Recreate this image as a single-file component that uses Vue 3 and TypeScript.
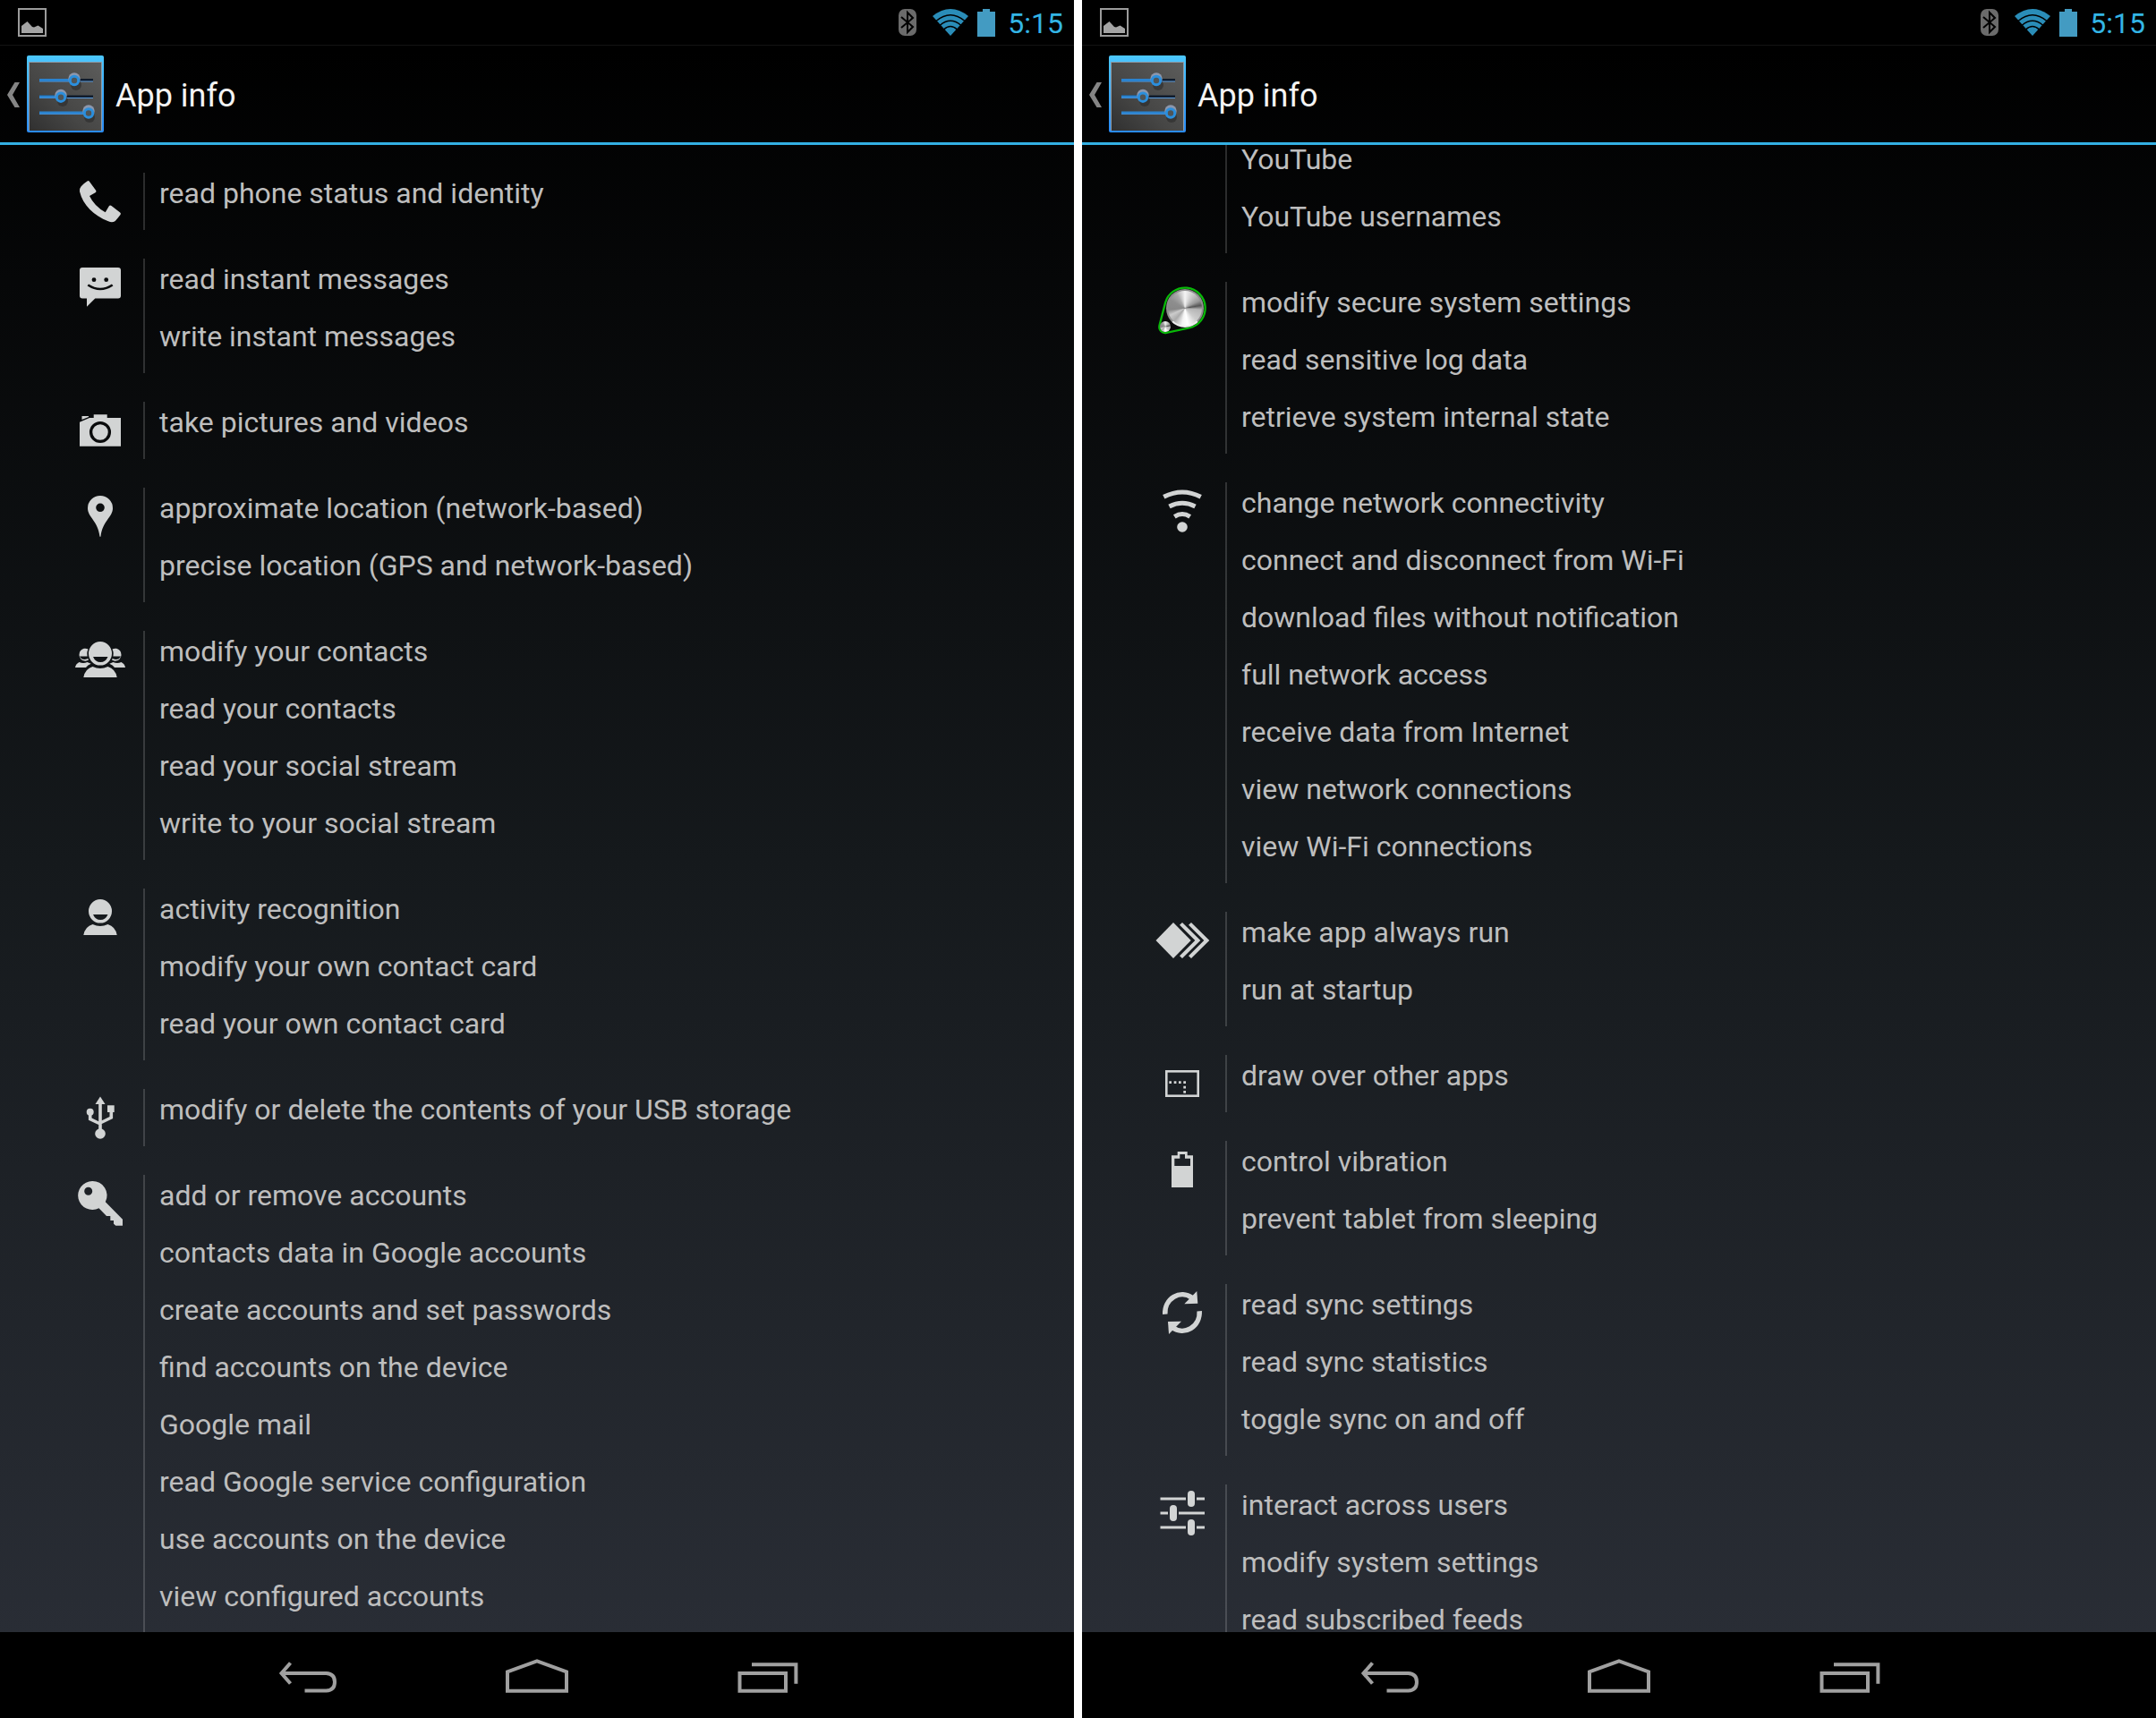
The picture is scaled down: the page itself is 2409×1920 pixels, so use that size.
<script setup lang="ts">
interface PermissionGroup {
  icon: string
  permissions: string[]
}

interface Screen {
  id: string
  scrolled: boolean
  groups: PermissionGroup[]
}

const screens: Screen[] = [
  {
    id: 'left',
    scrolled: false,
    groups: [
      { icon: 'phone', permissions: ['read phone status and identity'] },
      { icon: 'message', permissions: ['read instant messages', 'write instant messages'] },
      { icon: 'camera', permissions: ['take pictures and videos'] },
      {
        icon: 'location',
        permissions: ['approximate location (network-based)', 'precise location (GPS and network-based)'],
      },
      {
        icon: 'contacts',
        permissions: [
          'modify your contacts',
          'read your contacts',
          'read your social stream',
          'write to your social stream',
        ],
      },
      {
        icon: 'person',
        permissions: ['activity recognition', 'modify your own contact card', 'read your own contact card'],
      },
      { icon: 'usb', permissions: ['modify or delete the contents of your USB storage'] },
      {
        icon: 'key',
        permissions: [
          'add or remove accounts',
          'contacts data in Google accounts',
          'create accounts and set passwords',
          'find accounts on the device',
          'Google mail',
          'read Google service configuration',
          'use accounts on the device',
          'view configured accounts',
        ],
      },
    ],
  },
  {
    id: 'right',
    scrolled: true,
    groups: [
      { icon: 'none', permissions: ['YouTube', 'YouTube usernames'] },
      {
        icon: 'knob',
        permissions: ['modify secure system settings', 'read sensitive log data', 'retrieve system internal state'],
      },
      {
        icon: 'network',
        permissions: [
          'change network connectivity',
          'connect and disconnect from Wi-Fi',
          'download files without notification',
          'full network access',
          'receive data from Internet',
          'view network connections',
          'view Wi-Fi connections',
        ],
      },
      { icon: 'run', permissions: ['make app always run', 'run at startup'] },
      { icon: 'overlay', permissions: ['draw over other apps'] },
      { icon: 'battery', permissions: ['control vibration', 'prevent tablet from sleeping'] },
      { icon: 'sync', permissions: ['read sync settings', 'read sync statistics', 'toggle sync on and off'] },
      {
        icon: 'sliders',
        permissions: ['interact across users', 'modify system settings', 'read subscribed feeds'],
      },
    ],
  },
]
</script>

<template>
  <div class="screens">
    <section v-for="screen in screens" :key="screen.id" class="screen">
      <div class="status-bar">
        <svg class="picture-icon" viewBox="0 0 32 32" aria-hidden="true">
          <rect x="1" y="1" width="30" height="30" fill="none" stroke="#9c9c9c" stroke-width="2" />
          <path d="M4 28V20L10.500 15L16 21L18 21.500L22.500 19.500L28 23V28Z" fill="#a4a4a4" />
        </svg>
        <div class="indicators">
          <svg class="bluetooth-icon" viewBox="0 0 20 30" aria-hidden="true">
            <rect width="20" height="30" rx="7" fill="#6b6b6b" />
            <path d="M3 9L16 20L10 26V4L16 10L3 21" fill="none" stroke="#000" stroke-width="2" />
          </svg>
          <svg class="signal-icon" viewBox="0 0 40 30" aria-hidden="true">
            <path d="M0 8Q20-8 40 8L20 30Z" fill="#2a8db8" />
            <path d="M4 13.500Q20 0 36 13.500M8 18.500Q20 8 32 18.500M12.500 23Q20 16 27.500 23" fill="none" stroke="#000" stroke-width="1.600" />
          </svg>
          <svg class="charge-icon" viewBox="0 0 20 31" aria-hidden="true">
            <path d="M0 3H6V0H14V3H20V31H0Z" fill="#439bc2" />
          </svg>
          <time class="clock">5:15</time>
        </div>
      </div>

      <header class="action-bar">
        <button class="up-button" type="button" aria-label="Navigate up">
          <svg class="up-caret" viewBox="0 0 14 30" aria-hidden="true">
            <path d="M8.500 2H14L6 16L14 30H8.500L0 16Z" fill="#858585" />
          </svg>
          <svg class="app-icon" viewBox="0 0 86 86" aria-hidden="true">
            <defs>
              <linearGradient :id="`frame-${screen.id}`" x1="0" y1="0" x2="0" y2="1">
                <stop offset="0" stop-color="#4cc8ff" />
                <stop offset="1" stop-color="#2a8bf5" />
              </linearGradient>
              <linearGradient :id="`plate-${screen.id}`" x1="1" y1="0" x2="0" y2="1">
                <stop offset="0" stop-color="#5c5c5b" />
                <stop offset="0.600" stop-color="#464645" />
                <stop offset="1" stop-color="#303030" />
              </linearGradient>
            </defs>
            <rect width="86" height="86" rx="2" :fill="`url(#frame-${screen.id})`" />
            <rect x="2" y="7" width="82" height="77" fill="#8b9aa6" />
            <rect x="3" y="8" width="80" height="76" :fill="`url(#plate-${screen.id})`" />
            <g stroke-width="3">
              <path d="M14 27.500H74M14 46H74" stroke="#101c2c" />
              <path d="M14 29H74M14 47.500H74M14 65.500H68" stroke="#5b9bdc" stroke-width="1" />
              <path d="M14 27.500H50M14 46H36M14 64H68" stroke="#2b83cf" />
            </g>
            <g fill="#2b2b2b" opacity="0.600">
              <circle cx="55" cy="33" r="6" />
              <circle cx="40" cy="51" r="6" />
              <circle cx="70" cy="69" r="6" />
            </g>
            <g fill="#8c97ad">
              <circle cx="53" cy="26" r="6.700" />
              <circle cx="38" cy="44.500" r="6.700" />
              <circle cx="69" cy="62" r="6.700" />
            </g>
            <g fill="#4f5558" stroke="#2b8fdd" stroke-width="3">
              <circle cx="53" cy="28" r="4.700" />
              <circle cx="38" cy="46.700" r="4.700" />
              <circle cx="69" cy="64.500" r="4.700" />
            </g>
          </svg>
        </button>
        <h1 class="title">App info</h1>
      </header>

      <main class="content">
        <ul class="groups" :class="{ scrolled: screen.scrolled }">
          <li v-for="group in screen.groups" :key="group.icon" class="group">
            <svg class="group-icon" viewBox="0 0 64 64" aria-hidden="true">
              <path
                v-if="group.icon === 'phone'"
                d="M17.500 9.500Q19 8.500 20 10L27.300 20Q28 21.400 26.500 22.300L20 26Q25.500 37.500 37.700 44.300L41.700 37.500Q42.800 36 44.500 37L54.200 44.500Q55.600 45.700 54.500 47Q49.500 53.500 48 54.500Q45 56 41 54.300C25 48 12.500 36 9 21Q8.500 17.800 10.500 15.500Q14 11.500 17.500 9.500Z"
              />
              <template v-else-if="group.icon === 'message'">
                <path d="M12 10H52Q55 10 55 13V41.500Q55 44.500 52 44.500H26.300L17 53.700V44.500H12Q9 44.500 9 41.500V13Q9 10 12 10Z" />
                <circle cx="25" cy="23.700" r="2.400" class="ink" />
                <circle cx="38.700" cy="23.700" r="2.400" class="ink" />
                <path d="M18.300 29.500Q32 38.500 45.700 29.500" class="ink-line" stroke-width="2.600" />
              </template>
              <template v-else-if="group.icon === 'camera'">
                <path d="M9 22.700L20 18H24.700V14.300H39.700V18H55V49.700H9Z" />
                <path d="M11.500 16H19V17L11.500 20Z" />
                <circle cx="32" cy="34" r="10.400" class="ink-line" stroke-width="3.300" />
              </template>
              <path
                v-else-if="group.icon === 'location'"
                fill-rule="evenodd"
                d="M32 9A14 14 0 0 1 46 23C46 33 34.500 37 32.500 54.700H31.500C29.500 37 18 33 18 23A14 14 0 0 1 32 9ZM32 17.500A4.800 4.800 0 1 0 32 27.100A4.800 4.800 0 1 0 32 17.500Z"
              />
              <template v-else-if="group.icon === 'contacts'">
                <path d="M4 41Q4.500 37 8.500 35Q13 37 17.500 35L21.700 36.700Q18 38 16 41Z" />
                <path d="M60 41Q59.500 37 55.500 35Q51 37 46.500 35L42.300 36.700Q46 38 48 41Z" />
                <path fill-rule="evenodd" d="M18.500 20.500A6.800 7 0 1 0 19 32.500Q17 29 17.300 25Q17.500 22.500 18.500 20.500ZM9 28.500H17.500L18.300 31Q12 34 9 28.500Z" />
                <path fill-rule="evenodd" d="M45.500 20.500A6.800 7 0 1 1 45 32.500Q47 29 46.700 25Q46.500 22.500 45.500 20.500ZM55 28.500H46.500L45.700 31Q52 34 55 28.500Z" />
                <path fill-rule="evenodd" d="M32 12A13 13.300 0 1 0 32 38.600A13 13.300 0 1 0 32 12ZM24 29H40.500Q38 35 32.300 35Q26.500 35 24 29Z" />
                <path d="M13.300 52Q15 42.500 23.500 40Q32 44 40.500 40Q49 42.500 50.700 52Z" />
              </template>
              <template v-else-if="group.icon === 'person'">
                <path fill-rule="evenodd" d="M32 12A13 13.300 0 1 0 32 38.600A13 13.300 0 1 0 32 12ZM24 29H40.500Q38 35 32.300 35Q26.500 35 24 29Z" />
                <path d="M13.300 52Q15 42.500 23.500 40Q32 44 40.500 40Q49 42.500 50.700 52Z" />
              </template>
              <template v-else-if="group.icon === 'usb'">
                <path d="M32 8.500L37.500 17H26.500Z" />
                <circle cx="32" cy="50" r="5.800" />
                <circle cx="20.700" cy="25.700" r="4" />
                <rect x="40" y="18.300" width="7.700" height="7.700" />
                <path d="M32 15V46M20.700 26V33.500L32 39M44.300 25V32L32 38" class="line" stroke-width="3.600" />
              </template>
              <path
                v-else-if="group.icon === 'key'"
                fill-rule="evenodd"
                d="M23 7A16 16 0 0 1 37.800 30.300L57 49.700V56.700H49.300L47 54.700V51H43.300V46H39L30.500 37.200A16 16 0 1 1 23 7ZM18.700 13.800A4.500 4.500 0 1 0 18.700 22.800A4.500 4.500 0 1 0 18.700 13.800Z"
              />
              <template v-else-if="group.icon === 'knob'">
                <path
                  d="M13 23.600A22.700 22.700 0 1 1 39.700 51.500L14.400 56.900A6.700 6.700 0 0 1 6.500 48.600Z"
                  fill="#0a0a0a"
                  stroke="#08b808"
                  stroke-width="2.300"
                />
                <foreignObject x="14" y="8" width="42" height="43">
                  <div class="dial"></div>
                </foreignObject>
                <foreignObject x="7" y="44" width="12" height="12">
                  <div class="dial-small"></div>
                </foreignObject>
              </template>
              <template v-else-if="group.icon === 'network'">
                <path
                  d="M11.300 16.300Q32 5.700 52.700 16.300M17.500 27Q32 19.500 46.500 27M23.300 38.300Q32 32.700 40.700 38.300"
                  class="line"
                  stroke-width="5"
                />
                <circle cx="32" cy="50" r="5.800" />
              </template>
              <template v-else-if="group.icon === 'run'">
                <path d="M2.500 32L22 12L41.700 32L22 52Z" />
                <path d="M32 12L52.300 32L32 52L29 49.300L46.300 32L29 14.700Z" />
                <path d="M42 12L62.300 32L42 52L39 49.300L56.300 32L39 14.700Z" />
              </template>
              <template v-else-if="group.icon === 'overlay'">
                <rect x="14.300" y="18.300" width="35.400" height="27.400" class="line" stroke-width="2.600" />
                <path
                  d="M17.300 29.300h2.700v2.700h-2.700zM22.700 29.300h2.700v2.700h-2.700zM28 29.300h2.700v2.700h-2.700zM33.300 29.300h2.700v2.700h-2.700zM33.300 34.700h2.700v2.700h-2.700zM33.300 40h2.700v2.700h-2.700z"
                />
              </template>
              <path
                v-else-if="group.icon === 'battery'"
                fill-rule="evenodd"
                d="M20 16.300H26.700V12H37.700V16.300H44V52H20ZM23.300 19.700V28H41V19.700H35V15H29.300V19.700Z"
              />
              <template v-else-if="group.icon === 'sync'">
                <path d="M12.800 33.700A19.200 20.500 0 0 1 43 15.500M51.200 30.300A19.200 20.500 0 0 1 21 48.500" class="line" stroke-width="5.500" />
                <path d="M48.300 8L49.300 21.700L34.300 22.300Z" />
                <path d="M17 56L16 42L31 41.700Z" />
              </template>
              <template v-else-if="group.icon === 'sliders'">
                <path
                  d="M7.500 16H36M48 16H57M7.500 32H16M28 32H57M7.500 48H36M48 48H57"
                  class="line"
                  stroke-width="3"
                />
                <rect x="38" y="7" width="8" height="18" rx="4" />
                <rect x="18" y="23" width="8" height="18" rx="4" />
                <rect x="38" y="39" width="8" height="18" rx="4" />
              </template>
            </svg>
            <ul class="permissions">
              <li v-for="permission in group.permissions" :key="permission" class="permission">{{ permission }}</li>
            </ul>
          </li>
        </ul>
      </main>

      <nav class="nav-bar" aria-label="System">
        <button class="nav-button" type="button" aria-label="Back">
          <svg class="nav-icon" viewBox="0 0 96 96" aria-hidden="true">
            <path d="M28.500 34.500L18.500 46L28.500 57.500M18.500 46H68.500Q78 46.500 78 55.700Q78 65 68.500 65.500H44.500" />
          </svg>
        </button>
        <button class="nav-button" type="button" aria-label="Home">
          <svg class="nav-icon" viewBox="0 0 96 96" aria-hidden="true">
            <path d="M15 44.300L48 32.300L81 44.300V65.700H15Z" />
          </svg>
        </button>
        <button class="nav-button" type="button" aria-label="Recent apps">
          <svg class="nav-icon" viewBox="0 0 96 96" aria-hidden="true">
            <path d="M18.500 46H70V65.700H18.500ZM32 36.300H81.400V57.700" />
          </svg>
        </button>
      </nav>
    </section>
  </div>
</template>

<style>
body {
  margin: 0;
  background: #fff;
}
</style>

<style scoped>
.screens {
  display: flex;
  gap: 9px;
  height: 100vh;
  font-family: Roboto, 'Noto Sans', sans-serif;
}

.screen {
  flex: 1;
  min-width: 0;
  display: flex;
  flex-direction: column;
  overflow: hidden;
  background: linear-gradient(to bottom, #000 3%, #15191c 50%, #292d35 95%);
}

.status-bar {
  flex: none;
  box-sizing: border-box;
  height: 51px;
  padding: 0 12px 0 20px;
  border-bottom: 1px solid #141414;
  background: #000;
  display: flex;
  align-items: center;
  justify-content: space-between;
}

.indicators {
  display: flex;
  align-items: center;
}

.picture-icon {
  width: 32px;
  height: 32px;
}

.bluetooth-icon {
  width: 20px;
  height: 30px;
  margin-right: 18px;
}

.signal-icon {
  width: 40px;
  height: 30px;
  margin-right: 10px;
}

.charge-icon {
  width: 20px;
  height: 31px;
  margin-right: 14px;
}

.clock {
  padding-top: 2px;
  font-size: 32px;
  line-height: 46px;
  color: #33b5e5;
}

.action-bar {
  flex: none;
  box-sizing: border-box;
  height: 111px;
  padding-left: 8px;
  border-bottom: 3px solid #33b0e3;
  display: flex;
  align-items: center;
}

.up-button {
  display: flex;
  align-items: center;
  gap: 8px;
  margin: 0;
  padding: 0;
  border: 0;
  background: none;
}

.up-caret {
  width: 14px;
  height: 30px;
}

.app-icon {
  width: 86px;
  height: 86px;
}

.title {
  margin: 0 0 0 13px;
  padding-top: 4px;
  font-size: 36px;
  font-weight: 400;
  line-height: 42px;
  color: #f3f3f3;
}

.content {
  flex: 1;
  min-height: 0;
  overflow: hidden;
}

.groups,
.permissions {
  margin: 0;
  padding: 0;
  list-style: none;
}

.groups {
  display: flex;
  flex-direction: column;
  gap: 32px;
  padding: 31px 0 0 80px;
}

.groups.scrolled {
  padding-top: 0;
  margin-top: -7px;
}

.group {
  display: flex;
  gap: 16px;
}

.group-icon {
  flex: none;
  width: 64px;
  height: 64px;
  fill: #d2d4d4;
}

.line {
  fill: none;
  stroke: #d2d4d4;
}

.ink {
  fill: #0a0b0c;
}

.ink-line {
  fill: none;
  stroke: #0a0b0c;
}

.dial,
.dial-small {
  box-sizing: border-box;
  height: 100%;
  border-radius: 50%;
  background: conic-gradient(from 0deg, #f4f4f4, #bbb 40deg, #999 62deg, #555 80deg, #b5b5b5 95deg, #ccc 135deg, #fff 170deg, #f4f4f4 190deg, #aaa 220deg, #ccc 245deg, #888 265deg, #8e8e8e 300deg, #aaa 330deg, #f4f4f4);
}

.dial {
  border: 2px solid #8f8f8f;
  border-bottom-color: #eee;
}

.permissions {
  flex: 1;
  border-left: 2px solid rgba(255, 255, 255, 0.16);
  padding-left: 16px;
}

.permission {
  padding-bottom: 18px;
  font-size: 32px;
  line-height: 46px;
  color: #bebebe;
  white-space: nowrap;
}

.nav-bar {
  flex: none;
  height: 96px;
  background: #000;
  display: flex;
  justify-content: center;
}

.nav-button {
  width: 256px;
  margin: 0;
  padding: 0;
  border: 0;
  background: none;
}

.nav-icon {
  display: block;
  width: 96px;
  height: 96px;
  margin: 0 auto;
  fill: none;
  stroke: #a0a0a0;
  stroke-width: 4;
}
</style>
